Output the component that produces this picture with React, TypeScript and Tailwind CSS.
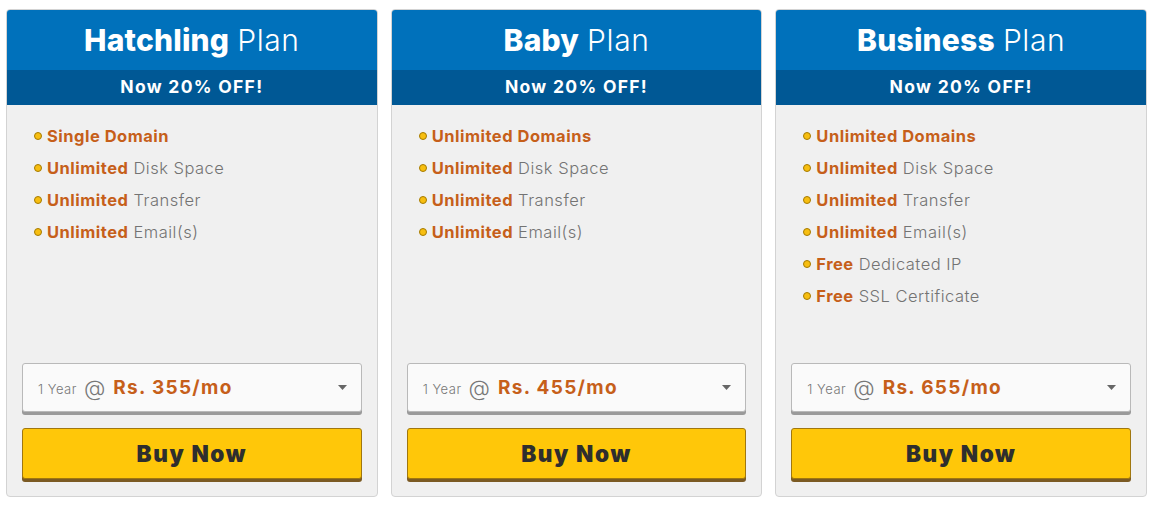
const plans = [
  {
    name: 'Hatchling',
    price: 'Rs. 355/mo',
    features: [
      ['Single Domain', ''],
      ['Unlimited', 'Disk Space'],
      ['Unlimited', 'Transfer'],
      ['Unlimited', 'Email(s)'],
    ],
  },
  {
    name: 'Baby',
    price: 'Rs. 455/mo',
    features: [
      ['Unlimited Domains', ''],
      ['Unlimited', 'Disk Space'],
      ['Unlimited', 'Transfer'],
      ['Unlimited', 'Email(s)'],
    ],
  },
  {
    name: 'Business',
    price: 'Rs. 655/mo',
    features: [
      ['Unlimited Domains', ''],
      ['Unlimited', 'Disk Space'],
      ['Unlimited', 'Transfer'],
      ['Unlimited', 'Email(s)'],
      ['Free', 'Dedicated IP'],
      ['Free', 'SSL Certificate'],
    ],
  },
];

function PlanCard({ plan }: { plan: (typeof plans)[number] }) {
  return (
    <div className="flex-1 h-[488px] flex flex-col border border-[#d3d3d3] rounded-[4px] overflow-hidden bg-[#f0f0f0]">
      <div className="h-[60px] bg-[#0071bb] flex items-center justify-center text-white text-[30px] leading-none tracking-[0.2px]">
        <span className="font-extrabold">{plan.name}</span>
        <span className="font-light ml-[8px] tracking-[0.6px]">Plan</span>
      </div>
      <div className="h-[35px] bg-[#005895] flex items-center justify-center text-white text-[17.5px] font-bold tracking-[1.3px]">
        Now 20% OFF!
      </div>
      <div className="flex-1 flex flex-col px-[15px] pb-[17px]">
        <ul className="pt-[15px] pl-[12px]">
          {plan.features.map(([bold, rest], i) => (
            <li key={i} className="h-[32px] flex items-center text-[16.5px] tracking-[0.5px]">
              <span className="w-[8px] h-[8px] rounded-full bg-[#f7be10] border border-[#a57a00] mr-[5px] shrink-0" />
              <span className="font-bold text-[#c65f1a]">{bold}</span>
              {rest && <span className="font-light text-[#737373] ml-[5px]">{rest}</span>}
            </li>
          ))}
        </ul>
        <div className="mt-auto">
          <div className="h-[49px] bg-[#fafafa] border border-[#b9b9b9] rounded-[3px] shadow-[0_3px_0_#9a9a9a] flex items-center pl-[15px] pr-[14px]">
            <span className="text-[13px] font-light text-[#777] pt-[4px] tracking-[0.5px]">1 Year</span>
            <span className="text-[22px] font-light text-[#777] ml-[7px] leading-none pt-[1px]">@</span>
            <span className="text-[19px] font-bold text-[#c65f1a] ml-[8px] tracking-[1.3px] pt-[2px]">{plan.price}</span>
            <svg className="ml-auto" width="9" height="5" viewBox="0 0 9 5">
              <path d="M0 0h9L4.5 5z" fill="#666" />
            </svg>
          </div>
          <button className="mt-[16px] w-full h-[51px] bg-[#ffc709] border border-[#a0770f] rounded-[3px] shadow-[0_3px_0_#7b5a23] text-[#2e2e2e] text-[22.5px] font-black tracking-[1.6px]">
            Buy Now
          </button>
        </div>
      </div>
    </div>
  );
}

export default function App() {
  return (
    <div className="w-[1153px] h-[505px] bg-white pt-[9px] pl-[6px] pr-[6px] flex gap-[13px] font-['Inter',sans-serif]">
      {plans.map((p) => (
        <PlanCard key={p.name} plan={p} />
      ))}
    </div>
  );
}
